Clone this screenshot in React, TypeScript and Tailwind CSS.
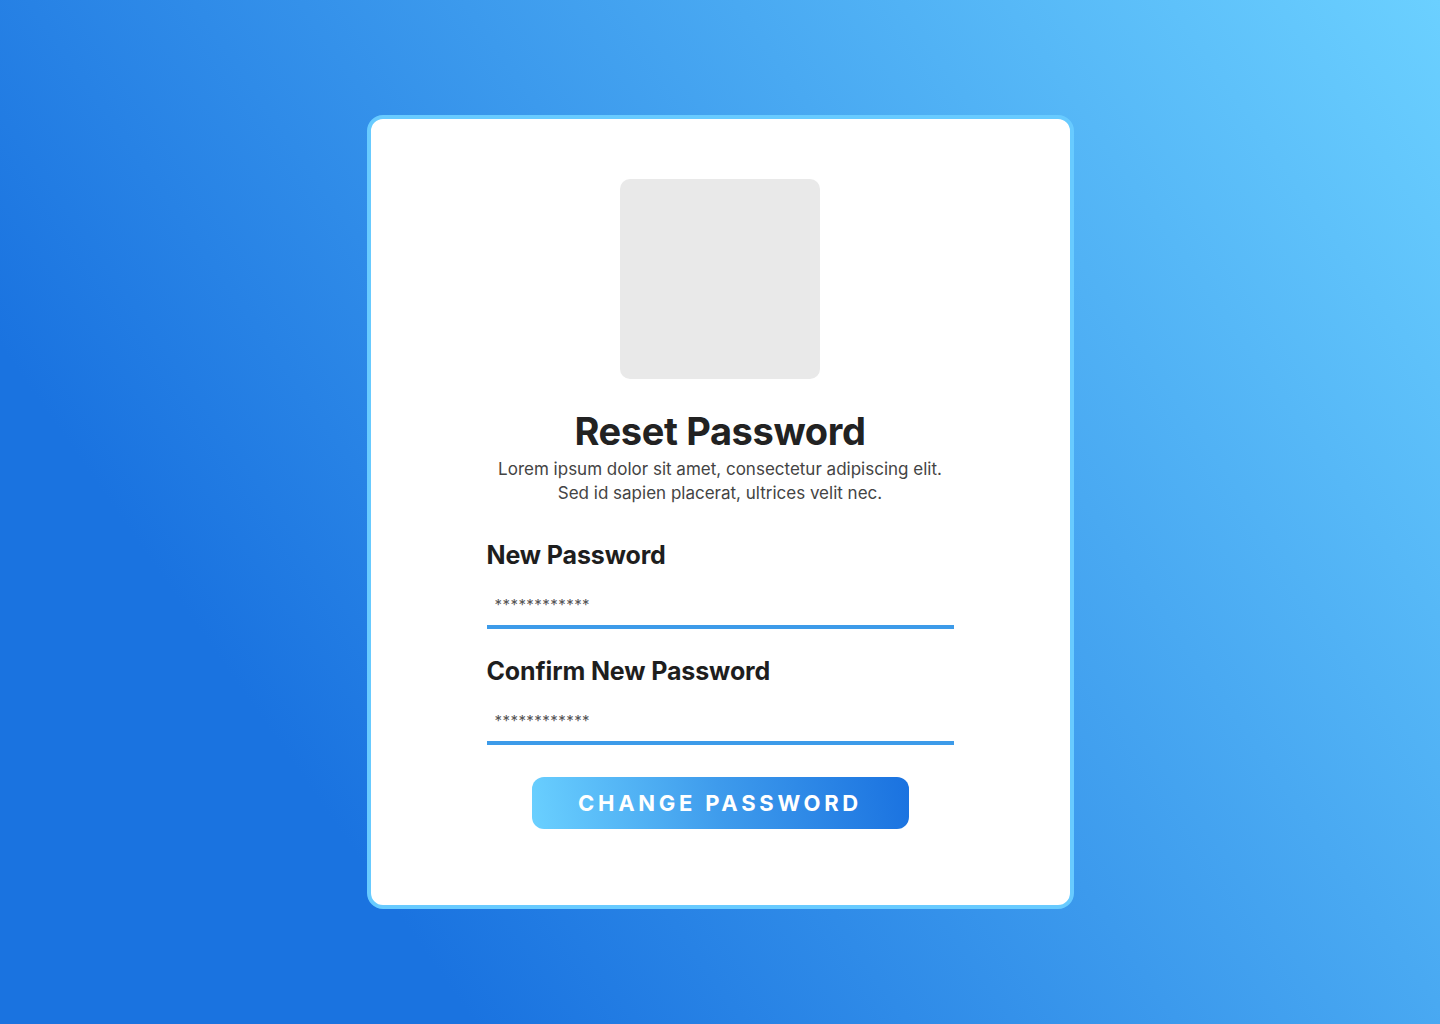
import React from 'react';

const font = { fontFamily: "'Inter', 'Liberation Sans', sans-serif" };

interface FieldProps {
  label: string;
  className?: string;
}

const PasswordField: React.FC<FieldProps> = ({ label, className }) => {
  return (
    <div className={`w-full flex flex-col ${className ?? ''}`}>
      <label className="text-[25px] leading-[32px] font-bold text-[#1e1e1e] tracking-[-0.005em]">{label}</label>
      <input
        type="text"
        readOnly
        value="************"
        className="w-full h-[58px] pt-[21px] pb-[9px] px-[8px] text-[15px] leading-[24px] text-[#555] tracking-[0.03em] bg-transparent outline-none border-b-4 border-[#3d9be9]"
        style={font}
      />
    </div>
  );
};

export default function App() {
  return (
    <div
      className="w-full min-h-screen h-[1024px] flex items-center justify-center bg-[linear-gradient(55deg,#1a73e0_22%,#6bd0ff_100%)]"
      style={font}
    >
      {/* Card */}
      <div className="w-[707px] bg-white border-4 border-[#68cbff] rounded-[16px] flex flex-col items-center pt-[60px] pb-[76px]">
        {/* Logo placeholder */}
        <div className="w-[200px] h-[200px] rounded-[10px] bg-[#e9e9e9]" />

        <h1 className="mt-[30px] text-[38px] leading-[44px] font-bold text-[#222] tracking-[-0.01em]">Reset Password</h1>
        <p className="mt-[4px] text-[17px] leading-[24px] text-[#444] text-center">
          Lorem ipsum dolor sit amet, consectetur adipiscing elit.
          <br />
          Sed id sapien placerat, ultrices velit nec.
        </p>

        {/* Form */}
        <div className="w-[467px] mt-[34px] flex flex-col">
          <PasswordField label="New Password" />
          <PasswordField label="Confirm New Password" className="mt-[26px]" />
        </div>

        <button className="mt-[32px] w-[377px] h-[52px] rounded-[12px] bg-[linear-gradient(80deg,#6ad0ff_0%,#3e9bec_50%,#1a72e0_100%)] text-white text-[22px] font-bold tracking-[0.17em] uppercase">
          Change Password
        </button>
      </div>
    </div>
  );
}
